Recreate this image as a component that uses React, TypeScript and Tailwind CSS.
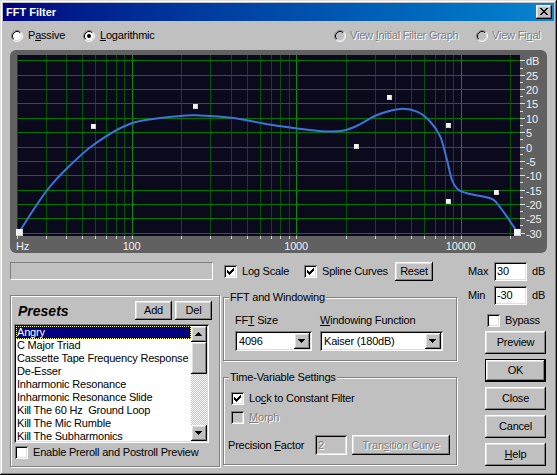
import React from "react";

const RAISED =
  "shadow-[inset_-1px_-1px_#000,inset_1px_1px_#fff,inset_-2px_-2px_#808080,inset_2px_2px_#dfdfdf]";
const SUNKEN =
  "shadow-[inset_1px_1px_#808080,inset_-1px_-1px_#fff,inset_2px_2px_#000,inset_-2px_-2px_#dfdfdf]";
const DIS = "text-[#808080] [text-shadow:1px_1px_0_#fff]";

function smooth(pts: [number, number][]) {
  let d = `M${pts[0][0]} ${pts[0][1]}`;
  for (let i = 0; i < pts.length - 1; i++) {
    const p0 = pts[i - 1] || pts[i];
    const p1 = pts[i];
    const p2 = pts[i + 1];
    const p3 = pts[i + 2] || p2;
    const c1x = p1[0] + (p2[0] - p0[0]) / 6;
    const c1y = p1[1] + (p2[1] - p0[1]) / 6;
    const c2x = p2[0] - (p3[0] - p1[0]) / 6;
    const c2y = p2[1] - (p3[1] - p1[1]) / 6;
    d += ` C${c1x.toFixed(2)} ${c1y.toFixed(2)} ${c2x.toFixed(2)} ${c2y.toFixed(2)} ${p2[0]} ${p2[1]}`;
  }
  return d;
}

const fx = (f: number) => 131.6 + 164.5 * Math.log10(f / 100);
const dbY = (db: number) => 146.5 - db * 2.87;

const FREQS: number[] = [];
for (const dec of [10, 100, 1000, 10000]) {
  for (let k = 1; k <= 9; k++) {
    const f = dec * k;
    if (f >= 20 && f <= 20000) FREQS.push(f);
  }
}
FREQS.push(20000);

const CURVE: [number, number][] = [
  [19, 232.5],
  [33.3, 210],
  [48, 189],
  [63.3, 172],
  [93.3, 145],
  [131.7, 123.3],
  [180, 116],
  [200, 115.5],
  [233, 118],
  [277, 125.7],
  [330, 131.6],
  [353.7, 127.3],
  [377, 115],
  [400, 109],
  [417, 111.7],
  [430.3, 121.7],
  [440.3, 136.7],
  [447, 160],
  [452, 180],
  [458.7, 190],
  [470.3, 194],
  [490.3, 198.3],
  [497, 203.3],
  [507, 216.7],
  [517.7, 232.7],
];

const POINTS: [number, number, number][] = [
  [19.3, 232.5, 7],
  [93.7, 126.7, 5],
  [195.7, 106.3, 5],
  [356.3, 146.7, 5],
  [389.7, 97.3, 5],
  [448.3, 125.3, 5],
  [448.3, 201.3, 5],
  [496.3, 192.3, 5],
  [517.7, 232.7, 7],
];

const DBS = [30, 25, 20, 15, 10, 5, 0, -5, -10, -15, -20, -25, -30];

function Graph() {
  return (
    <svg
      width={537}
      height={203}
      viewBox="10 50 537 203"
      className="block"
      fontFamily="'Liberation Sans', Arial, sans-serif"
      fontSize={11}
    >
      <rect x={17} y={55} width={503} height={181} fill="#0a0a1c" />
      {FREQS.map((f) => {
        const x = Math.round(fx(f)) + 0.5;
        const major = f === 100 || f === 1000 || f === 10000;
        return (
          <g key={f}>
            <line
              x1={x}
              x2={x}
              y1={55}
              y2={236}
              stroke={major ? "#009000" : "#005200"}
              strokeWidth={1}
            />
            <line x1={x} x2={x} y1={236} y2={239} stroke="#d0d0d0" />
          </g>
        );
      })}
      {DBS.map((db) => {
        const y = Math.round(dbY(db)) + 0.5;
        return (
          <g key={db}>
            <line x1={17} x2={520} y1={y} y2={y} stroke="#007800" />
            <line x1={520} x2={525} y1={y} y2={y} stroke="#e0e0e0" />
            {db > -30 && (
              <line
                x1={520}
                x2={523}
                y1={Math.round(dbY(db - 2.5)) + 0.5}
                y2={Math.round(dbY(db - 2.5)) + 0.5}
                stroke="#e0e0e0"
              />
            )}
            <text x={526} y={y + 4} fill="#f0f0f0">
              {db === 30 ? "dB" : String(db)}
            </text>
          </g>
        );
      })}
      <path
        d={smooth(CURVE)}
        fill="none"
        stroke="#3d74d9"
        strokeWidth={2}
        strokeLinejoin="round"
      />
      {POINTS.map(([x, y, s], i) => (
        <g key={i} shapeRendering="crispEdges">
          <rect
            x={Math.round(x - s / 2)}
            y={Math.round(y - s / 2)}
            width={s}
            height={s}
            fill="#d0d0d0"
          />
          <rect
            x={Math.round(x - s / 2)}
            y={Math.round(y - s / 2)}
            width={s - 1}
            height={s - 1}
            fill="#f4f4f4"
          />
        </g>
      ))}
      <text x={16} y={250} fill="#f0f0f0">
        Hz
      </text>
      <text x={fx(100)} y={250} fill="#f0f0f0" textAnchor="middle">
        100
      </text>
      <text x={fx(1000)} y={250} fill="#f0f0f0" textAnchor="middle">
        1000
      </text>
      <text x={fx(10000)} y={250} fill="#f0f0f0" textAnchor="middle">
        10000
      </text>
    </svg>
  );
}

function Radio({ checked, disabled }: { checked?: boolean; disabled?: boolean }) {
  return (
    <svg width={12} height={12} className="block shrink-0">
      <circle cx={6} cy={6} r={4.5} fill={disabled ? "#c0c0c0" : "#fff"} />
      <path d="M2.11 9.89 A5.5 5.5 0 0 1 9.89 2.11" fill="none" stroke="#808080" />
      <path d="M9.89 2.11 A5.5 5.5 0 0 1 2.11 9.89" fill="none" stroke="#fff" />
      <path d="M2.82 9.18 A4.5 4.5 0 0 1 9.18 2.82" fill="none" stroke="#000" />
      <path d="M9.18 2.82 A4.5 4.5 0 0 1 2.82 9.18" fill="none" stroke="#dfdfdf" />
      {checked && <circle cx={6} cy={6} r={2} fill="#000" />}
    </svg>
  );
}

function Check({ checked, disabled }: { checked?: boolean; disabled?: boolean }) {
  return (
    <div
      className={`w-[13px] h-[13px] shrink-0 ${SUNKEN} ${disabled ? "bg-[#c0c0c0]" : "bg-white"}`}
    >
      {checked && (
        <svg width={13} height={13} className="block" shapeRendering="crispEdges">
          <path
            d="M9 3h1v1h-1z M8 4h2v1h-2z M3 5h1v1h-1z M7 5h3v1h-3z M3 6h2v1h-2z M6 6h3v1h-3z M3 7h5v1h-5z M4 8h3v1h-3z M5 9h1v1h-1z"
            fill={disabled ? "#808080" : "#000"}
          />
        </svg>
      )}
    </div>
  );
}

function Arrow({ down }: { down?: boolean }) {
  return (
    <svg width={16} height={16} className="block" shapeRendering="crispEdges">
      <path
        d={
          down
            ? "M4 6h7v1h-7z M5 7h5v1h-5z M6 8h3v1h-3z M7 9h1v1h-1z"
            : "M7 6h1v1h-1z M6 7h3v1h-3z M5 8h5v1h-5z M4 9h7v1h-7z"
        }
        fill="#000"
      />
    </svg>
  );
}

function Btn({
  children,
  className = "",
  disabled,
}: {
  children: React.ReactNode;
  className?: string;
  disabled?: boolean;
}) {
  return (
    <div
      className={`flex items-center justify-center bg-[#c0c0c0] ${RAISED} ${disabled ? DIS : ""} ${className}`}
    >
      {children}
    </div>
  );
}

function Combo({ value, width }: { value: string; width: string }) {
  return (
    <div className={`${width} h-[20px] bg-white ${SUNKEN} flex items-center p-[2px]`}>
      <div className="flex-1 pl-[2px] leading-[13px]">{value}</div>
      <div className={`w-[16px] h-[16px] bg-[#c0c0c0] ${RAISED}`}>
        <Arrow down />
      </div>
    </div>
  );
}

function Group({
  title,
  className = "",
  children,
}: {
  title: string;
  className?: string;
  children: React.ReactNode;
}) {
  return (
    <div
      className={`relative border border-[#808080] shadow-[inset_1px_1px_#fff,1px_1px_#fff] ${className}`}
    >
      <div className="absolute left-[5px] top-[-7px] px-[1px] bg-[#c0c0c0] leading-[13px]">
        {title}
      </div>
      {children}
    </div>
  );
}

const PRESETS = [
  "Angry",
  "C Major Triad",
  "Cassette Tape Frequency Response",
  "De-Esser",
  "Inharmonic Resonance",
  "Inharmonic Resonance Slide",
  "Kill The 60 Hz  Ground Loop",
  "Kill The Mic Rumble",
  "Kill The Subharmonics",
];

export default function App() {
  return (
    <div
      className="w-[557px] h-[475px] bg-[#c0c0c0] p-[3px] flex flex-col text-[11px] leading-[13px] tracking-[-0.2px] text-black shadow-[inset_-1px_-1px_#000,inset_1px_1px_#dfdfdf,inset_-2px_-2px_#808080,inset_2px_2px_#fff] overflow-hidden select-none"
      style={{ fontFamily: "'Liberation Sans', Arial, sans-serif" }}
    >
      {/* Title bar */}
      <div className="h-[18px] shrink-0 flex items-center bg-linear-to-r from-[#000080] to-[#1084d0] pl-[3px] pr-[2px]">
        <div className="flex-1 text-white font-bold tracking-normal">FFT Filter</div>
        <div className={`w-[16px] h-[14px] bg-[#c0c0c0] ${RAISED}`}>
          <svg width={16} height={14} className="block" shapeRendering="crispEdges">
            <path
              d="M4 3h2v1h-2z M10 3h2v1h-2z M5 4h2v1h-2z M9 4h2v1h-2z M6 5h4v1h-4z M7 6h2v1h-2z M6 7h4v1h-4z M5 8h2v1h-2z M9 8h2v1h-2z M4 9h2v1h-2z M10 9h2v1h-2z"
              fill="#000"
            />
          </svg>
        </div>
      </div>

      {/* Radio row */}
      <div className="h-[29px] shrink-0 flex items-center">
        <div className="ml-[8px] w-[72px] flex items-center gap-[5px]">
          <Radio />
          <span>
            P<u>a</u>ssive
          </span>
        </div>
        <div className="w-[251px] flex items-center gap-[5px]">
          <Radio checked />
          <span>
            <u>L</u>ogarithmic
          </span>
        </div>
        <div className="w-[142px] flex items-center gap-[4px]">
          <Radio disabled />
          <span className={DIS}>
            View <u>I</u>nitial Filter Graph
          </span>
        </div>
        <div className="flex items-center gap-[4px]">
          <Radio disabled />
          <span className={DIS}>
            View Fi<u>n</u>al
          </span>
        </div>
      </div>

      {/* Graph panel */}
      <div className="ml-[7px] w-[537px] h-[203px] shrink-0 bg-[#616161] rounded-[6px] overflow-hidden">
        <Graph />
      </div>

      {/* Bottom controls */}
      <div className="flex flex-1">
        {/* Left column */}
        <div className="ml-[7px] w-[213px] flex flex-col">
          <div className="mt-[9px] w-[203px] h-[18px] border border-[#808080] border-r-white border-b-white" />
          <div className="mt-[15px] w-[210px] h-[172px] border border-[#808080] shadow-[inset_1px_1px_#fff,1px_1px_#fff] flex flex-col pl-[3px] pr-[7px] pt-[5px]">
            <div className="flex items-center h-[19px]">
              <div className="flex-1 pl-[4px] font-bold italic text-[14px] leading-[16px] tracking-normal">
                Presets
              </div>
              <Btn className="w-[37px] h-[19px]">Add</Btn>
              <Btn className="ml-[3px] w-[37px] h-[19px]">Del</Btn>
            </div>
            <div className={`mt-[4px] w-[195px] h-[119px] bg-white ${SUNKEN} p-[2px] flex`}>
              <div className="flex-1 overflow-hidden flex flex-col">
                {PRESETS.map((p, i) => (
                  <div
                    key={p}
                    className={`h-[13px] shrink-0 pl-[1px] whitespace-pre leading-[13px] ${
                      i === 0
                        ? "bg-[#000080] text-white outline-1 outline-dotted outline-[#ffff80] -outline-offset-1"
                        : ""
                    }`}
                  >
                    {p}
                  </div>
                ))}
              </div>
              <div className="w-[16px] flex flex-col">
                <div className={`h-[16px] bg-[#c0c0c0] ${RAISED}`}>
                  <Arrow />
                </div>
                <div className={`h-[32px] bg-[#c0c0c0] ${RAISED}`} />
                <div className="flex-1 bg-[conic-gradient(#fff_25%,#c0c0c0_0_50%,#fff_0_75%,#c0c0c0_0)] bg-[length:2px_2px]" />
                <div className={`h-[16px] bg-[#c0c0c0] ${RAISED}`}>
                  <Arrow down />
                </div>
              </div>
            </div>
            <div className="mt-[3px] flex items-center gap-[5px] pl-[1px]">
              <Check />
              <span>Enable Preroll and Postroll Preview</span>
            </div>
          </div>
        </div>

        {/* Middle column */}
        <div className="w-[235px] flex flex-col">
          <div className="mt-[9px] h-[19px] flex items-center">
            <div className="ml-[1px] w-[80px] flex items-center gap-[5px]">
              <Check checked />
              <span>Log Scale</span>
            </div>
            <div className="w-[91px] flex items-center gap-[5px]">
              <Check checked />
              <span>Spline Curves</span>
            </div>
            <Btn className="w-[38px] h-[19px]">Reset</Btn>
          </div>

          <Group title="FFT and Windowing" className="mt-[16px] h-[64px] w-[234px]">
            <div className="pl-[11px] pt-[16px] flex">
              <div className="w-[85px] flex flex-col">
                <div className="h-[13px]">
                  FF<u>T</u> Size
                </div>
                <div className="mt-[4px]">
                  <Combo value="4096" width="w-[77px]" />
                </div>
              </div>
              <div className="flex flex-col">
                <div className="h-[13px]">
                  <u>W</u>indowing Function
                </div>
                <div className="mt-[4px]">
                  <Combo value="Kaiser (180dB)" width="w-[123px]" />
                </div>
              </div>
            </div>
          </Group>

          <Group title="Time-Variable Settings" className="mt-[16px] h-[88px] w-[234px]">
            <div className="pl-[7px] pt-[14px] flex flex-col">
              <div className="flex items-center gap-[5px]">
                <Check checked />
                <span>
                  Lo<u>c</u>k to Constant Filter
                </span>
              </div>
              <div className="mt-[6px] flex items-center gap-[5px]">
                <Check disabled />
                <span className={DIS}>
                  <u>M</u>orph
                </span>
              </div>
              <div className="mt-[11px] -ml-[3px] flex items-center h-[20px]">
                <span className="w-[87px]">
                  Precision <u>F</u>actor
                </span>
                <div
                  className={`w-[32px] h-[20px] bg-[#c0c0c0] ${SUNKEN} pl-[3px] flex items-center ${DIS}`}
                >
                  2
                </div>
                <Btn disabled className="ml-[5px] w-[98px] h-[20px]">
                  <span>
                    Tran<u>s</u>ition Curve
                  </span>
                </Btn>
              </div>
            </div>
          </Group>
        </div>

        {/* Right column */}
        <div className="ml-[10px] w-[80px] flex flex-col">
          <div className="mt-[9px] h-[19px] flex items-center">
            <span className="w-[26px]">Max</span>
            <div className={`w-[33px] h-[19px] bg-white ${SUNKEN} pl-[3px] flex items-center`}>30</div>
            <span className="ml-[5px]">dB</span>
          </div>
          <div className="mt-[5px] h-[19px] flex items-center">
            <span className="w-[26px]">Min</span>
            <div className={`w-[33px] h-[19px] bg-white ${SUNKEN} pl-[3px] flex items-center`}>-30</div>
            <span className="ml-[5px]">dB</span>
          </div>
          <div className="mt-[9px] ml-[19px] flex items-center gap-[5px]">
            <Check />
            <span>Bypass</span>
          </div>
          <Btn className="mt-[4px] ml-[17px] w-[61px] h-[23px]">Preview</Btn>
          <div className="mt-[5px] ml-[17px] w-[61px] h-[23px] border border-black">
            <Btn className="w-full h-full">OK</Btn>
          </div>
          <Btn className="mt-[5px] ml-[17px] w-[61px] h-[23px]">Close</Btn>
          <Btn className="mt-[5px] ml-[17px] w-[61px] h-[23px]">Cancel</Btn>
          <Btn className="mt-[5px] ml-[17px] w-[61px] h-[23px]">
            <span>
              <u>H</u>elp
            </span>
          </Btn>
        </div>
      </div>
    </div>
  );
}
